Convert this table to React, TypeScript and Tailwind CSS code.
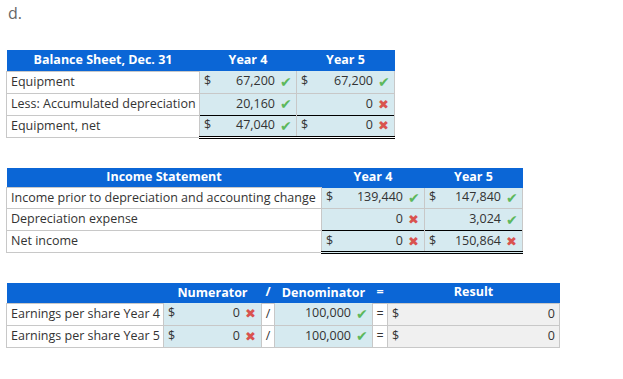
import type { ReactNode } from "react"

const Ok = () => (
  <span className="ml-[5px] w-[12px] text-[14px] leading-none text-[#5cb85c] font-['DejaVu_Sans',sans-serif]">✔</span>
)
const Bad = () => (
  <span className="ml-[5px] w-[12px] text-[13px] leading-none text-[#d9534f] font-['DejaVu_Sans',sans-serif]">✖</span>
)

function Val({
  dollar,
  v,
  mark,
  cls = "",
}: {
  dollar?: boolean
  v: string
  mark?: ReactNode
  cls?: string
}) {
  return (
    <td className={`bg-[#d6eaf0] border-x border-[#c8c8c8] pl-[4px] pr-[4px] ${cls}`}>
      <div className="flex items-center">
        <span>{dollar ? "$" : ""}</span>
        <span className="flex-1 text-right">{v}</span>
        {mark}
      </div>
    </td>
  )
}

function Label({ children }: { children: ReactNode }) {
  return <td className="bg-white border border-[#c8c8c8] pl-[4px] whitespace-nowrap">{children}</td>
}

export default function App() {
  return (
    <div className="w-[623px] h-[379px] bg-white text-[12.5px] text-[#333] font-['Open_Sans',sans-serif]">
      <div className="pl-[8px] pt-[2px] text-[16px] leading-[22px] text-[#666]">d.</div>

      {/* Balance sheet */}
      <table className="table-fixed ml-[6px] mt-[26px] w-[388px]">
        <thead>
          <tr className="h-[21px] bg-[#0b66d6] text-white font-bold">
            <th className="w-[193px] text-center">Balance Sheet, Dec. 31</th>
            <th className="w-[97px] text-center">Year 4</th>
            <th className="w-[98px] text-center">Year 5</th>
          </tr>
        </thead>
        <tbody>
          <tr className="h-[22px] border-b border-[#c8c8c8]">
            <Label>Equipment</Label>
            <Val dollar v="67,200" mark={<Ok />} />
            <Val dollar v="67,200" mark={<Ok />} />
          </tr>
          <tr className="h-[22px]">
            <Label>Less: Accumulated depreciation</Label>
            <Val v="20,160" mark={<Ok />} cls="border-b border-b-black" />
            <Val v="0" mark={<Bad />} cls="border-b border-b-black" />
          </tr>
          <tr className="h-[22px]">
            <Label>Equipment, net</Label>
            <Val dollar v="47,040" mark={<Ok />} cls="border-b-[3px] border-double border-b-black" />
            <Val dollar v="0" mark={<Bad />} cls="border-b-[3px] border-double border-b-black" />
          </tr>
        </tbody>
      </table>

      {/* Income statement */}
      <table className="table-fixed ml-[6px] mt-[29px] w-[516px]">
        <thead>
          <tr className="h-[20px] bg-[#0b66d6] text-white font-bold">
            <th className="w-[315px] text-center">Income Statement</th>
            <th className="w-[103px] text-center">Year 4</th>
            <th className="w-[98px] text-center">Year 5</th>
          </tr>
        </thead>
        <tbody>
          <tr className="h-[21px] border-b border-[#c8c8c8]">
            <Label>Income prior to depreciation and accounting change</Label>
            <Val dollar v="139,440" mark={<Ok />} />
            <Val dollar v="147,840" mark={<Ok />} />
          </tr>
          <tr className="h-[22px]">
            <Label>Depreciation expense</Label>
            <Val v="0" mark={<Bad />} cls="border-b border-b-black" />
            <Val v="3,024" mark={<Ok />} cls="border-b border-b-black" />
          </tr>
          <tr className="h-[22px]">
            <Label>Net income</Label>
            <Val dollar v="0" mark={<Bad />} cls="border-b-[3px] border-double border-b-black" />
            <Val dollar v="150,864" mark={<Bad />} cls="border-b-[3px] border-double border-b-black" />
          </tr>
        </tbody>
      </table>

      {/* EPS */}
      <table className="table-fixed ml-[6px] mt-[29px] w-[553px]">
        <thead>
          <tr className="h-[20px] bg-[#0b66d6] text-white font-bold">
            <th className="w-[157px]"></th>
            <th className="w-[98px] text-center">Numerator</th>
            <th className="w-[13px] text-center">/</th>
            <th className="w-[98px] text-center">Denominator</th>
            <th className="w-[15px] text-center">=</th>
            <th className="w-[172px] text-center">Result</th>
          </tr>
        </thead>
        <tbody>
          {["Earnings per share Year 4", "Earnings per share Year 5"].map((l) => (
            <tr key={l} className="h-[22px] border-b border-[#c8c8c8]">
              <Label>{l}</Label>
              <Val dollar v="0" mark={<Bad />} />
              <td className="bg-white border border-[#c8c8c8] text-center">/</td>
              <Val v="100,000" mark={<Ok />} />
              <td className="bg-white border border-[#c8c8c8] text-center">=</td>
              <td className="bg-[#f0f0f0] border border-[#c8c8c8] pl-[4px] pr-[4px]">
                <div className="flex">
                  <span>$</span>
                  <span className="flex-1 text-right">0</span>
                </div>
              </td>
            </tr>
          ))}
        </tbody>
      </table>
    </div>
  )
}
